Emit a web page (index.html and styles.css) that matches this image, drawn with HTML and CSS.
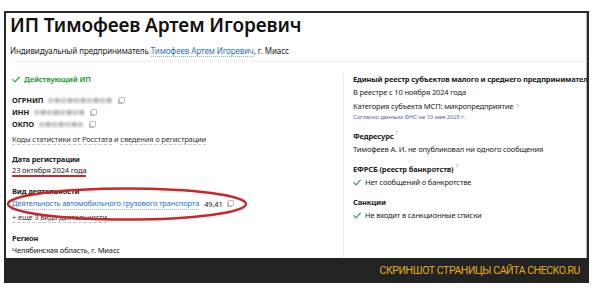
FILE: index.html
```html
<!DOCTYPE html>
<html lang="ru">
<head>
<meta charset="utf-8">
<link rel="stylesheet" href="styles.css">
</head>
<body>
<div class="shot">
  <div class="frame">
    <div class="head">
      <h1 class="title">ИП Тимофеев Артем Игоревич</h1>
      <div class="sub">Индивидуальный предприниматель <a class="link">Тимофеев Артем Игоревич</a>, г. Миасс</div>
    </div>
    <div class="cols">
      <div class="left">
        <div class="status"><svg class="check" viewBox="0 0 10 8"><path d="M1 4.2 L3.8 7 L9 1.2"/></svg>Действующий ИП</div>
        <div class="codes">
          <div class="code"><b>ОГРНИП</b><span class="blur w64"></span><svg class="copy" viewBox="0 0 8 8"><rect x="1.5" y="0.5" width="6" height="6" rx="1"/><path d="M0.5 2.5 V7.5 H5.5"/></svg></div>
          <div class="code"><b>ИНН</b><span class="blur w50"></span><svg class="copy" viewBox="0 0 8 8"><rect x="1.5" y="0.5" width="6" height="6" rx="1"/><path d="M0.5 2.5 V7.5 H5.5"/></svg></div>
          <div class="code"><b>ОКПО</b><span class="blur w44"></span><svg class="copy" viewBox="0 0 8 8"><rect x="1.5" y="0.5" width="6" height="6" rx="1"/><path d="M0.5 2.5 V7.5 H5.5"/></svg></div>
        </div>
        <div class="stat"><span class="dash">Коды статистики от Росстата</span> и <span class="dash">сведения о регистрации</span></div>
        <div class="block">
          <div class="label">Дата регистрации</div>
          <div class="val"><span class="redline">23 октября 2024 года</span></div>
        </div>
        <div class="block">
          <div class="label">Вид деятельности</div>
          <div class="val"><a class="link">Деятельность автомобильного грузового транспорта</a> <span class="okved">49.41</span><svg class="copy" viewBox="0 0 8 8"><rect x="1.5" y="0.5" width="6" height="6" rx="1"/><path d="M0.5 2.5 V7.5 H5.5"/></svg></div>
          <div class="more"><span class="dash">+ еще 3 вида деятельности</span></div>
          <svg class="ellipse" viewBox="0 0 244 36"><ellipse cx="122" cy="18" rx="119" ry="15.5"/></svg>
        </div>
        <div class="block region">
          <div class="label">Регион</div>
          <div class="val">Челябинская область, г. Миасс</div>
        </div>
      </div>
      <div class="right">
        <div class="rblock">
          <div class="label nowrap">Единый реестр субъектов малого и среднего предпринимательства</div>
          <div class="val">В реестре с 10 ноября 2024 года</div>
          <div class="val mt2">Категория субъекта МСП: микропредприятие <sup class="q">?</sup></div>
          <div class="note">Согласно данным ФНС на 10 мая 2025 г.</div>
        </div>
        <div class="rblock">
          <div class="label">Федресурс <sup class="q">?</sup></div>
          <div class="val">Тимофеев А. И. не опубликовал ни одного сообщения</div>
        </div>
        <div class="rblock">
          <div class="label">ЕФРСБ (реестр банкротств) <sup class="q">?</sup></div>
          <div class="val mt1"><svg class="check" viewBox="0 0 10 8"><path d="M1 4.2 L3.8 7 L9 1.2"/></svg>Нет сообщений о банкротстве</div>
        </div>
        <div class="rblock">
          <div class="label">Санкции</div>
          <div class="val mt1"><svg class="check" viewBox="0 0 10 8"><path d="M1 4.2 L3.8 7 L9 1.2"/></svg>Не входит в санкционные списки</div>
        </div>
      </div>
    </div>
  </div>
  <div class="bar">СКРИНШОТ СТРАНИЦЫ САЙТА CHECKO.RU</div>
</div>
</body>
</html>
```

FILE: styles.css
```css
* { box-sizing: border-box; }
html, body { margin: 0; padding: 0; background: #fff; }
body { font-family: "Noto Sans", "DejaVu Sans", sans-serif; color: #222; font-size: 7.5px; line-height: 12px; letter-spacing: -0.15px; }

.shot { margin: 11px 0 0 4px; width: 585px; }
.frame {
  height: 247px;
  border: 2px solid #2a2a2a;
  border-bottom: none;
  box-shadow: inset -1px 0 0 #b5b5b5;
  background: #fff;
  overflow: hidden;
  display: flex;
  flex-direction: column;
}
.head { padding: 0 0 0 4px; }
.title { margin: 0; font-size: 19px; line-height: 24px; font-weight: 600; letter-spacing: -0.1px; color: #111; }
.sub { margin-top: 8px; font-size: 8px; line-height: 12px; color: #222; padding-bottom: 4px; letter-spacing: -0.1px; }
.link { color: #1f6fd6; border-bottom: 1px dotted #8db1e6; text-decoration: none; }

.cols { display: flex; flex: 1; margin-left: 6px; border-top: 1px solid #f1f1f1; }
.left { width: 331px; position: relative; }
.right { flex: 1; margin-top: 11px; border-left: 1px solid #ececec; padding-left: 9px; overflow: hidden; }

.status { margin-top: 11px; color: #2f9e3e; font-weight: 700; display: flex; align-items: center; gap: 4px; }
.check { width: 8px; height: 7px; fill: none; stroke: #3aa64a; stroke-width: 1.6; stroke-linecap: round; stroke-linejoin: round; flex: none; }
.codes { margin-top: 9px; }
.code { display: flex; align-items: center; gap: 3px; }
.code b { font-weight: 700; color: #222; }
.blur { display: inline-block; height: 5px; background: repeating-linear-gradient(90deg, #bdbdbd 0 5px, #e2e2e2 5px 7px, #9e9e9e 7px 11px, #d5d5d5 11px 13px); filter: blur(1.2px); opacity: 0.8; margin-left: 2px; }
.w64 { width: 64px; }
.w50 { width: 50px; }
.w44 { width: 44px; }
.copy { width: 7px; height: 7px; fill: none; stroke: #9a9a9a; stroke-width: 0.8; margin-left: 3px; flex: none; }
.stat { margin-top: 3px; color: #333; }
.dash { border-bottom: 1px dashed #c4c4c4; }
.block { margin-top: 8px; position: relative; }
.label { font-weight: 700; color: #222; }
.val { color: #222; display: flex; align-items: center; gap: 3px; white-space: nowrap; }
.val .copy { margin-left: 1px; }
.redline { border-bottom: 2px solid #cc2a2a; line-height: 10px; }
.okved { color: #222; margin-left: 2px; }
.more { margin-top: 1px; color: #333; }
.ellipse { position: absolute; left: -7px; top: 1px; width: 244px; height: 36px; fill: none; stroke: #c8282a; stroke-width: 2.4; }
.region { margin-top: 9px; }

.rblock { margin-bottom: 8px; }
.nowrap { white-space: nowrap; }
.rblock .val { margin-top: 1px; }
.mt2 { margin-top: 2px !important; }
.mt1 { margin-top: 1px; gap: 4px; }
.note { font-size: 6px; line-height: 10px; color: #5b6ea0; }
.q { color: #a5b0c0; font-size: 6px; font-weight: 400; vertical-align: 4px; line-height: 0; }

.bar {
  height: 25px;
  background: #232323;
  color: #e6ad13;
  font-family: Roboto, "Liberation Sans", sans-serif;
  font-size: 10.5px;
  letter-spacing: -0.4px;
  display: flex;
  align-items: center;
  justify-content: flex-end;
  padding-right: 9px;
}
```
